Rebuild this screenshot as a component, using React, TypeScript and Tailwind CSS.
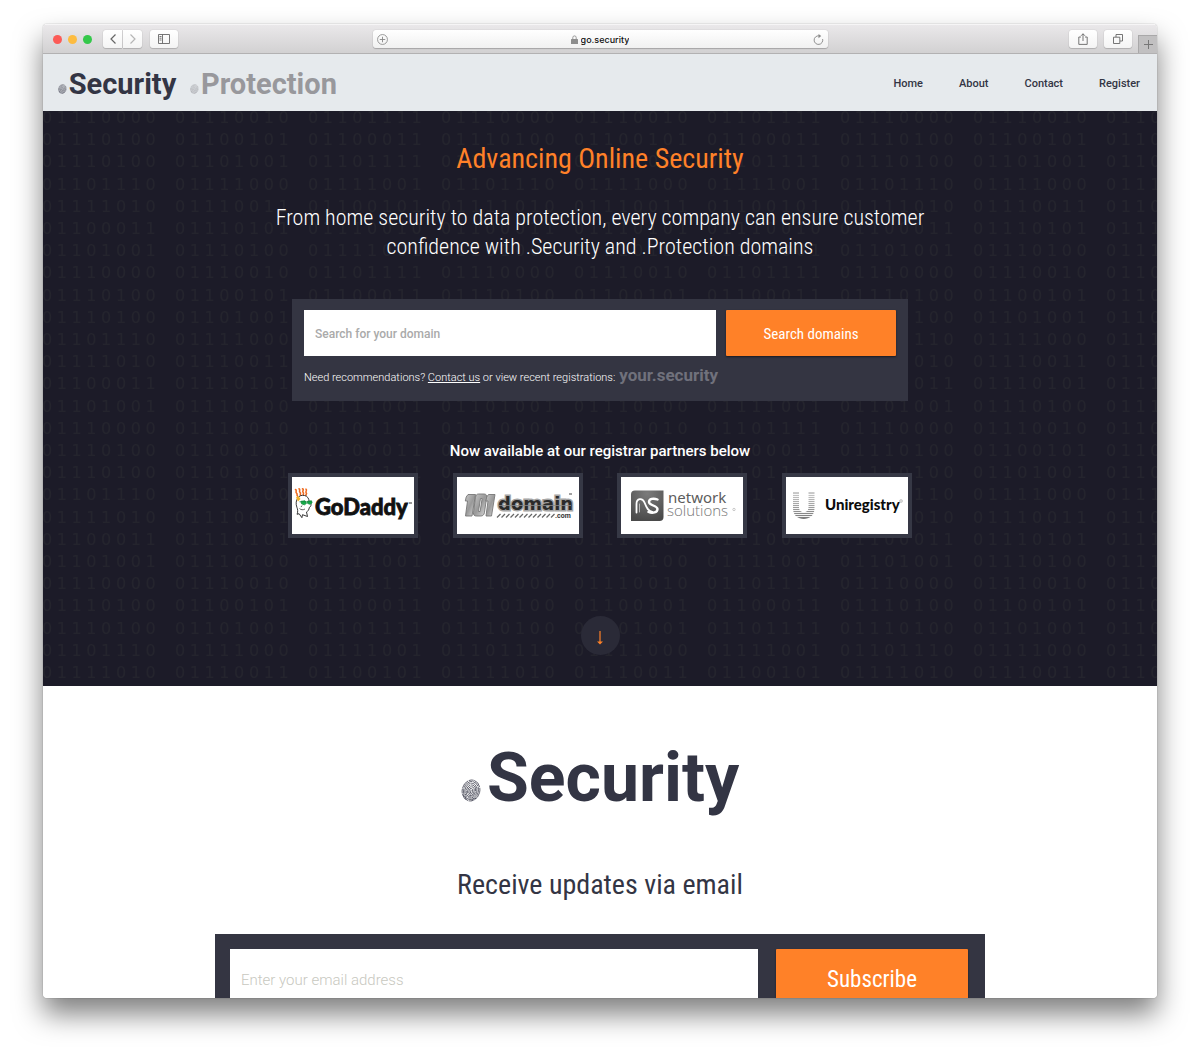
import type { ReactNode } from 'react';

const partners = [
  { name: 'GoDaddy', logo: <GoDaddyLogo /> },
  { name: '101domain', logo: <Domain101Logo /> },
  { name: 'Network Solutions', logo: <NetworkSolutionsLogo /> },
  { name: 'Uniregistry', logo: <UniregistryLogo /> },
];

const links = ['Home', 'About', 'Contact', 'Register'];

const toBits = (text: string) =>
  [...text].map(char => char.charCodeAt(0).toString(2).padStart(8, '0'));

const bits = toBits('protectionxyzsecurity');

// 26 rows of three bytes each, every byte takes nine cells
const binaryRows = Array.from({ length: 26 }, (_, row) => {
  const start = (row % 7) * 3;
  return bits
    .slice(start, start + 3)
    .flatMap((byte, word) =>
      [...byte].map((digit, i) => ({ digit, x: ((word * 9 + i) * 133) / 9 }))
    );
});

function BinaryBackground() {
  return (
    <svg className="absolute inset-0 size-full" aria-hidden="true">
      <defs>
        <pattern id="binary" width="399" height="577" patternUnits="userSpaceOnUse">
          <g fontFamily="DejaVu Sans" fontSize="16" fill="#24242d">
            {binaryRows.map((row, r) => (
              <text
                key={r}
                x={row.map(cell => cell.x - 1).join(' ')}
                y={12 + Math.round((r * 111) / 5)}
              >
                {row.map(cell => cell.digit).join('')}
              </text>
            ))}
          </g>
        </pattern>
      </defs>
      <rect width="100%" height="100%" fill="url(#binary)" />
    </svg>
  );
}

function Fingerprint({ className }: { className: string }) {
  return (
    <svg viewBox="0 0 20 23" className={className} fill="none" stroke="currentColor" aria-hidden="true">
      <g transform="rotate(14 10 11.5)" strokeWidth="0.7">
        <ellipse cx="10" cy="11.5" rx="8.8" ry="10.6" strokeDasharray="9 0.8 5 0.6" />
        <ellipse cx="10" cy="11.5" rx="7.4" ry="9.1" strokeDasharray="7 0.6 11 0.7" />
        <ellipse cx="10" cy="11.7" rx="6" ry="7.5" strokeDasharray="12 0.7 4 0.5" />
        <ellipse cx="10" cy="11.9" rx="4.6" ry="6" strokeDasharray="6 0.5 9 0.6" />
        <ellipse cx="10" cy="12.1" rx="3.2" ry="4.5" strokeDasharray="8 0.6" />
        <ellipse cx="10" cy="12.3" rx="1.8" ry="3" />
        <path d="M10 10.8v3.4M3 17.5c2 .6 3.4 2 4.4 4M13 21c1-1.6 2.4-2.6 4-3.2" />
      </g>
    </svg>
  );
}

function GoDaddyLogo() {
  return (
    <svg viewBox="0 0 122 57" className="w-full">
      <g fill="none" stroke="#ee6a1f" strokeWidth="1.6" strokeLinecap="round">
        <path d="M3.5 12.5c2 .8-.5 2.5 1 3.6s-.2 2 1 3" />
        <path d="M7 11.8c2 .8-.5 2.5 1 3.6s-.4 2 .6 3" />
        <path d="M10.5 11.8c2 .8-.7 2.5.6 3.6s-.4 2 .3 3" />
        <path d="M14 12.200c1.600.9-1 2.500.2 3.600s-.6 1.600-.3 2.600" />
      </g>
      <path
        d="M6 21c1-2.5 4-3 6.5-2.5 3 .6 4.5 3 4.600 6 2.800 1 2.400 5 .2 6-.2 2.200-1.400 3.800-2.800 4.500l1 4.500-5-1.800-.6 3-2.800-4-2 .6c1-3 .6-5-.2-7C3.600 27 4 23 6 21z"
        fill="#fff"
        stroke="#222"
        strokeWidth="0.9"
        strokeLinejoin="round"
      />
      <path d="M4 20.5l2.5-1.5 2 3-2.5 2.500z" fill="#f3b229" />
      <path d="M7.5 24.8h12M9 24.3l4-.5 1.500 2.500-2 1.500-3-1zM15.500 24.300l4-.5.6 2-2 1.500-2.400-.8z" fill="#17b04b" stroke="#118a3c" strokeWidth="0.8" />
      <path d="M7.500 31.500c1.500 1.500 3.500 1.600 5.500.5M10 28.500l-1 1.600" fill="none" stroke="#222" strokeWidth="0.7" />
      <text
        x="23"
        y="38"
        fontFamily="Lato"
        fontWeight="900"
        fontSize="22"
        fill="#111"
        stroke="#111"
        strokeWidth="0.8"
      >
        GoDaddy
      </text>
      <path d="M117 26h3" stroke="#333" />
    </svg>
  );
}

function Domain101Logo() {
  return (
    <svg viewBox="0 0 122 57" className="w-full">
      <defs>
        <linearGradient id="steel" x1="0" x2="1" y1="0" y2="1">
          <stop offset="0" stopColor="#c8c8c8" />
          <stop offset="0.5" stopColor="#999" />
          <stop offset="1" stopColor="#ddd" />
        </linearGradient>
      </defs>
      <g stroke="#777" strokeWidth="0.9" strokeLinejoin="round">
        <path d="M11 17.500h7.500l-3.500 21.500H8.500l2-15H8.300l.9-4z" fill="url(#steel)" />
        <path
          d="M21.500 17h5.500c2 0 3 1.200 2.700 3.200l-2.300 15.600c-.4 2-1.600 3.200-3.600 3.200h-4.600c-2 0-3-1.200-2.700-3.200l2-15.600c.3-2 1.300-3.200 3-3.200zM23.500 21.500l-2 13h1.600l2-13z"
          fill="url(#steel)"
          fillRule="evenodd"
        />
        <path d="M31.500 17.500h6.500l-3.500 21.500h-5.500l2-15h-2.200l.9-4z" fill="url(#steel)" />
      </g>
      <text
        x="41"
        y="33"
        fontFamily="DejaVu Sans"
        fontWeight="bold"
        fontSize="18"
        fill="#2a2a2a"
        stroke="#a5a5a5"
        strokeWidth="3"
        paintOrder="stroke"
      >
        domain
      </text>
      <path d="M42 28.500h72" stroke="#888" strokeWidth="0.8" />
      <path d="M112 17h3" stroke="#444" />
      <g stroke="#666" strokeWidth="1.200">
        {Array.from({ length: 13 }, (_, i) => (
          <path key={i} d={`M${40 + i * 4.5} 40.5l3.5-3.500`} />
        ))}
      </g>
      <text x="98" y="41" fontFamily="Roboto" fontWeight="bold" fontSize="7" fill="#333">
        .com
      </text>
    </svg>
  );
}

function NetworkSolutionsLogo() {
  return (
    <svg viewBox="0 0 122 57" className="w-full">
      <defs>
        <radialGradient id="tile" cx="0.5" cy="0.1" r="0.9">
          <stop offset="0" stopColor="#7b7b7b" />
          <stop offset="1" stopColor="#4a4a4a" />
        </radialGradient>
      </defs>
      <path d="M14 13.500h28.500V40a4 4 0 0 1-4 4H10V17.500a4 4 0 0 1 4-4z" fill="url(#tile)" />
      <g fill="none" stroke="#fff" strokeLinecap="round">
        <path d="M15.500 35.500V27c0-6 6-6.500 8-1.500 2.200 5.500 4 9.500 8 9.500" strokeWidth="1.800" />
        <path d="M18.500 35v-8" stroke="#ccc" strokeWidth="0.800" />
        <path d="M36.500 22.500c-4-1.600-8.500-.8-8.500 2.500 0 3.500 8.500 3.500 8.500 7 0 3.600-5 4.600-9 3" strokeWidth="2.400" />
      </g>
      <text x="47" y="26" fontFamily="Noto Sans" fontSize="15" fill="#5c5c5c">
        network
      </text>
      <text x="46" y="39" fontFamily="Open Sans" fontWeight="300" fontSize="15" fill="#777">
        solutions
      </text>
      <circle cx="113" cy="32.500" r="1.200" fill="none" stroke="#999" strokeWidth="0.500" />
    </svg>
  );
}

function UniregistryLogo() {
  return (
    <svg viewBox="0 0 122 57" className="w-full">
      <defs>
        <linearGradient id="fade" x1="0" x2="0" y1="0" y2="1">
          <stop offset="0" stopColor="#ccc" />
          <stop offset="1" stopColor="#777" />
        </linearGradient>
      </defs>
      <path d="M7 15h6v15.500c0 6.500 9.500 6.500 9.500 0V15h6v16.500c0 14-21.500 14-21.500 0z" fill="url(#fade)" />
      <g stroke="#fff" strokeWidth="0.900">
        {Array.from({ length: 12 }, (_, i) => (
          <path key={i} d={`M6 ${17.5 + i * 2}h24`} />
        ))}
      </g>
      <text
        x="39"
        y="33"
        fontFamily="Lato"
        fontWeight="900"
        fontSize="15"
        fill="#0c0c0c"
      >
        Uniregistry
      </text>
      <circle cx="115" cy="24" r="1.500" fill="#ddd" stroke="#aaa" strokeWidth="0.500" />
    </svg>
  );
}

function ToolbarButton({ label, className, children }: { label: string; className: string; children: ReactNode }) {
  return (
    <button
      type="button"
      aria-label={label}
      className={`flex h-[18px] items-center justify-center bg-linear-to-b from-white to-[#f4f4f4] text-[#666] shadow-[0_0_1px_rgba(0,0,0,0.3),0_1px_1px_rgba(0,0,0,0.15)] ${className}`}
    >
      {children}
    </button>
  );
}

function Toolbar() {
  return (
    <div className="grid h-[30px] grid-cols-[1fr_455px_1fr] items-center border-t border-b border-t-[#f6f5f6] border-b-[#b2b1b2] bg-linear-to-b from-[#eae8ea] to-[#d2d1d2]">
      <div className="flex items-center pl-[10px]">
        <div className="flex gap-[6px]">
          <span className="size-[9px] rounded-full bg-[#fc5b57]" />
          <span className="size-[9px] rounded-full bg-[#fdbc40]" />
          <span className="size-[9px] rounded-full bg-[#34c84a]" />
        </div>
        <div className="ml-[11px] flex gap-px">
          <ToolbarButton label="Back" className="w-[19px] rounded-l-[3px]">
            <svg viewBox="0 0 6 10" className="h-[10px] w-[6px]" fill="none" stroke="currentColor" strokeWidth="1.200">
              <path d="M5.500.5L1 5l4.500 4.500" />
            </svg>
          </ToolbarButton>
          <ToolbarButton label="Forward" className="w-[19px] rounded-r-[3px]">
            <svg viewBox="0 0 6 10" className="h-[10px] w-[6px] text-[#b5b5b5]" fill="none" stroke="currentColor" strokeWidth="1.200">
              <path d="M.5.5L5 5 .5 9.500" />
            </svg>
          </ToolbarButton>
        </div>
        <ToolbarButton label="Sidebar" className="ml-2 w-7 rounded-[3px]">
          <svg viewBox="0 0 12 10" className="h-[10px] w-3" fill="none" stroke="currentColor" strokeWidth="0.900">
            <path d="M.5.5h11v9H.5zM4.500.5v9M1.500 2.500h2M1.500 4.200h2M1.500 6h2" />
          </svg>
        </ToolbarButton>
      </div>

      <div className="flex h-[18px] items-center justify-between rounded-[3px] bg-linear-to-b from-white to-[#f1f1f1] px-1 text-[#888] shadow-[0_0_1px_rgba(0,0,0,0.3),0_1px_1px_rgba(0,0,0,0.2)]">
        <button type="button" aria-label="Add">
          <svg viewBox="0 0 12 12" className="size-[11px]" fill="none" stroke="currentColor">
            <circle cx="6" cy="6" r="5.400" strokeWidth="0.900" />
            <path d="M6 3v6M3 6h6" />
          </svg>
        </button>
        <div className="flex items-center gap-[3px]">
          <svg viewBox="0 0 7 9" className="h-[9px] w-[7px]">
            <path d="M1.800 4.500V2.600a1.700 1.700 0 0 1 3.400 0v1.900" fill="none" stroke="#999" />
            <rect y="4" width="7" height="5" rx="0.500" fill="#8d8d8d" />
          </svg>
          <input
            type="text"
            aria-label="Address"
            defaultValue="go.security"
            className="field-sizing-content bg-transparent pt-px font-[Inter] text-[9px] leading-3 font-medium text-[#111] outline-none"
          />
        </div>
        <button type="button" aria-label="Reload">
          <svg viewBox="0 0 12 12" className="size-[11px]" fill="none" stroke="currentColor">
            <path d="M10.500 5.500A4.700 4.700 0 1 1 6.500 2" />
            <path d="M6 0l3 2.200L6 4.500z" fill="currentColor" stroke="none" />
          </svg>
        </button>
      </div>

      <div className="flex h-full items-center justify-end">
        <ToolbarButton label="Share" className="w-7 rounded-[3px]">
          <svg viewBox="0 0 10 12" className="h-3 w-[10px]" fill="none" stroke="currentColor" strokeWidth="0.900">
            <path d="M3 4H.8v7.400h8.400V4H7M5 8V.8M3 2.800l2-2 2 2" />
          </svg>
        </ToolbarButton>
        <ToolbarButton label="Tabs" className="ml-[7px] w-7 rounded-[3px]">
          <svg viewBox="0 0 10 10" className="size-[10px]" fill="none" stroke="currentColor" strokeWidth="0.900">
            <path d="M.5 3.200h6.300v6.300H.5zM3 3V.5h6.500V7H7" />
          </svg>
        </ToolbarButton>
        <button
          type="button"
          aria-label="New tab"
          className="ml-[6px] flex h-[18px] w-[19px] items-center justify-center self-end border-t border-l border-[#a9a8a9] bg-[#c1c0c1] text-[#777]"
        >
          <svg viewBox="0 0 9 9" className="size-[9px]" stroke="currentColor">
            <path d="M4.500 0v9M0 4.500h9" />
          </svg>
        </button>
      </div>
    </div>
  );
}

function Header() {
  return (
    <header className="flex h-[57px] items-center justify-between bg-[#e6eaed] pt-[3px] pr-[17px] pl-[15px]">
      <div className="flex gap-[14px] text-[29px] leading-[34px] font-bold">
        <a href="#security" className="flex items-end gap-0.5 text-[#333544]">
          <Fingerprint className="mb-[7px] h-[10px]" />
          Security
        </a>
        <a href="#protection" className="flex items-end gap-0.5 text-[#98989c]">
          <Fingerprint className="mb-[7px] h-[10px]" />
          Protection
        </a>
      </div>
      <nav className="flex gap-9 text-[11px] font-medium text-[#333544]">
        {links.map(link => (
          <a key={link} href={`#${link.toLowerCase()}`}>
            {link}
          </a>
        ))}
      </nav>
    </header>
  );
}

function Hero() {
  return (
    <section className="relative bg-[#1c1b28] text-white">
      <BinaryBackground />
      <div className="relative flex flex-col items-center pt-7 pb-[31px]">
        <h1 className="font-['Roboto_Condensed'] text-[28px] leading-10 text-[#ff8128]">Advancing Online Security</h1>
        <p className="mt-6 max-w-[660px] text-center font-['Roboto_Condensed'] text-[22px] leading-[29px] font-light">
          From home security to data protection, every company can ensure customer confidence with .Security and
          .Protection domains
        </p>

        <form className="mt-[38px] w-[616px] max-w-full bg-[#343542] px-3 pt-[11px] pb-3" onSubmit={e => e.preventDefault()}>
          <div className="flex gap-[10px]">
            <input
              type="text"
              aria-label="Search for your domain"
              placeholder="Search for your domain"
              className="h-[46px] min-w-0 flex-1 bg-white px-[11px] pt-0.5 text-[12px] font-medium text-[#333544] placeholder:text-[#aaa]"
            />
            <button
              type="submit"
              className="h-[46px] w-[170px] rounded-[1px] bg-[#ff8128] pt-0.5 font-['Roboto_Condensed'] text-[15px] shadow-[0_1px_2px_rgba(0,0,0,0.5)]"
            >
              Search domains
            </button>
          </div>
          <p className="mt-[9px] text-[11px] leading-[22px] font-light">
            Need recommendations?{' '}
            <a href="#contact" className="underline">
              Contact us
            </a>{' '}
            or view recent registrations:
            <strong className="ml-1 text-[17px] leading-5 font-bold text-[#70717c]">your.security</strong>
          </p>
        </form>

        <h2 className="mt-[38px] text-[15px] leading-6 font-medium">Now available at our registrar partners below</h2>
        <ul className="mt-[10px] flex w-[624px] max-w-full justify-between">
          {partners.map(({ name, logo }) => (
            <li key={name}>
              <a
                href="#partners"
                aria-label={name}
                className="flex h-[65px] w-[130px] items-center border-4 border-[#363845] bg-white"
              >
                {logo}
              </a>
            </li>
          ))}
        </ul>

        <a
          href="#updates"
          aria-label="Scroll down"
          className="mt-[78px] flex size-[39px] items-center justify-center rounded-full bg-[#2a2a37] text-[#ff8128]"
        >
          <svg viewBox="0 0 8 14" className="mt-1 h-[14px]" fill="none" stroke="currentColor">
            <path d="M4 0v12" strokeWidth="1.200" />
            <path d="M1 10.500h6l-3 3z" fill="currentColor" stroke="none" />
          </svg>
        </a>
      </div>
    </section>
  );
}

function Updates() {
  return (
    <section id="updates" className="flex flex-col items-center pt-[50px] text-[#333544]">
      <div className="flex items-end gap-[6px] text-[68px] leading-[84px] font-bold">
        <Fingerprint className="mb-[18px] h-[23px]" />
        Security
      </div>
      <h2 className="mt-[45px] font-['Roboto_Condensed'] text-[28px] leading-10">Receive updates via email</h2>
      <form
        className="mt-[29px] flex w-[770px] max-w-full gap-[18px] bg-[#343542] py-[15px] pr-[17px] pl-[15px]"
        onSubmit={e => e.preventDefault()}
      >
        <input
          type="email"
          aria-label="Enter your email address"
          placeholder="Enter your email address"
          className="h-[62px] min-w-0 flex-1 bg-white px-[11px] text-[15px] font-light placeholder:text-[#c8c8c0]"
        />
        <button
          type="submit"
          className="h-[62px] w-48 rounded-[1px] bg-[#ff8128] font-['Roboto_Condensed'] text-[23px] text-white shadow-[0_1px_2px_rgba(0,0,0,0.5)]"
        >
          Subscribe
        </button>
      </form>
    </section>
  );
}

function App() {
  return (
    <div className="h-screen bg-white px-[43px] pt-6 pb-[62px] font-[Roboto,sans-serif]">
      <div className="h-full rounded-[4px] shadow-[0_0_1px_rgba(0,0,0,0.6),0_16px_28px_rgba(0,0,0,0.5)]">
        <div className="h-full overflow-hidden rounded-[4px] bg-white">
          <Toolbar />
          <Header />
          <Hero />
          <Updates />
        </div>
      </div>
    </div>
  );
}

export default App;
